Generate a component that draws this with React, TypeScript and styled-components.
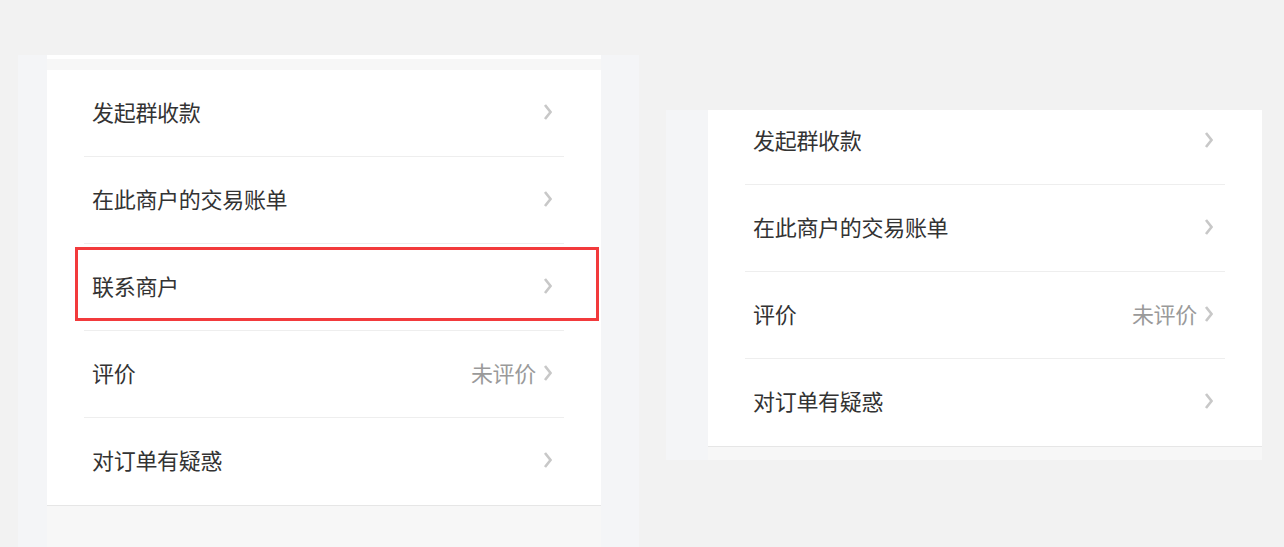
import React from "react";
import styled, { createGlobalStyle } from "styled-components";

const GlobalStyle = createGlobalStyle`
  html, body {
    margin: 0;
    padding: 0;
    background: #f2f2f2;
    font-family: "Noto Sans CJK SC", "Noto Sans", sans-serif;
  }
`;

const Page = styled.div`
  display: flex;
  align-items: flex-start;
  width: 1284px;
  height: 547px;
  overflow: hidden;
`;

const Frame = styled.div<{ $top: number; $left: number; $width: number; $height: number; $pad: number }>`
  margin-top: ${(p) => p.$top}px;
  margin-left: ${(p) => p.$left}px;
  width: ${(p) => p.$width}px;
  height: ${(p) => p.$height}px;
  padding-left: ${(p) => p.$pad}px;
  box-sizing: border-box;
  background: #f4f5f7;
  overflow: hidden;
  display: flex;
`;

const Screen = styled.div`
  width: 554px;
  height: 100%;
  background: #f7f7f7;
  display: flex;
  flex-direction: column;
  overflow: hidden;
`;

const TopCap = styled.div`
  height: 4px;
  background: #ffffff;
  flex-shrink: 0;
`;

const TopGap = styled.div`
  height: 11px;
  flex-shrink: 0;
`;

const List = styled.div<{ $shift?: number }>`
  background: #ffffff;
  border-bottom: 1px solid #e6e6e6;
  margin-top: ${(p) => -(p.$shift || 0)}px;
  flex-shrink: 0;
`;

const Row = styled.div`
  position: relative;
  height: 87px;
  padding: 0 49px 3px 45px;
  box-sizing: border-box;
  display: flex;
  align-items: center;

  &:not(:last-child)::after {
    content: "";
    position: absolute;
    left: 37px;
    right: 37px;
    bottom: 0;
    height: 1px;
    background: #eeeeee;
  }
`;

const Label = styled.span`
  flex: 1;
  font-size: 22px;
  line-height: 30px;
  margin-bottom: 3px;
  color: #333333;
  letter-spacing: -0.3px;
`;

const Value = styled.span`
  font-size: 22px;
  line-height: 30px;
  margin-bottom: 3px;
  color: #9a9a9a;
  margin-right: 7px;
  letter-spacing: -0.3px;
`;

const Highlight = styled.div`
  position: absolute;
  left: 28px;
  right: 2px;
  top: 3px;
  height: 74px;
  border: 3px solid #f23a3c;
  box-sizing: border-box;
  pointer-events: none;
`;

const Chevron = () => (
  <svg width="9" height="18" viewBox="0 0 9 18">
    <polyline points="2,2 7.5,9 2,16" fill="none" stroke="#c8c8c8" strokeWidth="2.6" />
  </svg>
);

type Item = { label: string; value?: string };

const items: Item[] = [
  { label: "发起群收款" },
  { label: "在此商户的交易账单" },
  { label: "联系商户" },
  { label: "评价", value: "未评价" },
  { label: "对订单有疑惑" },
];

const Menu = ({ rows, highlight }: { rows: Item[]; highlight?: number }) => (
  <>
    {rows.map((it, i) => (
      <Row key={it.label}>
        <Label>{it.label}</Label>
        {it.value && <Value>{it.value}</Value>}
        <Chevron />
        {highlight === i && <Highlight />}
      </Row>
    ))}
  </>
);

export default function App() {
  const rightRows = items.filter((it) => it.label !== "联系商户");
  return (
    <>
      <GlobalStyle />
      <Page>
        <Frame $top={55} $left={18} $width={621} $height={492} $pad={29}>
          <Screen>
            <TopCap />
            <TopGap />
            <List>
              <Menu rows={items} highlight={2} />
            </List>
          </Screen>
        </Frame>
        <Frame $top={110} $left={27} $width={596} $height={350} $pad={42}>
          <Screen>
            <List $shift={12}>
              <Menu rows={rightRows} />
            </List>
          </Screen>
        </Frame>
      </Page>
    </>
  );
}
